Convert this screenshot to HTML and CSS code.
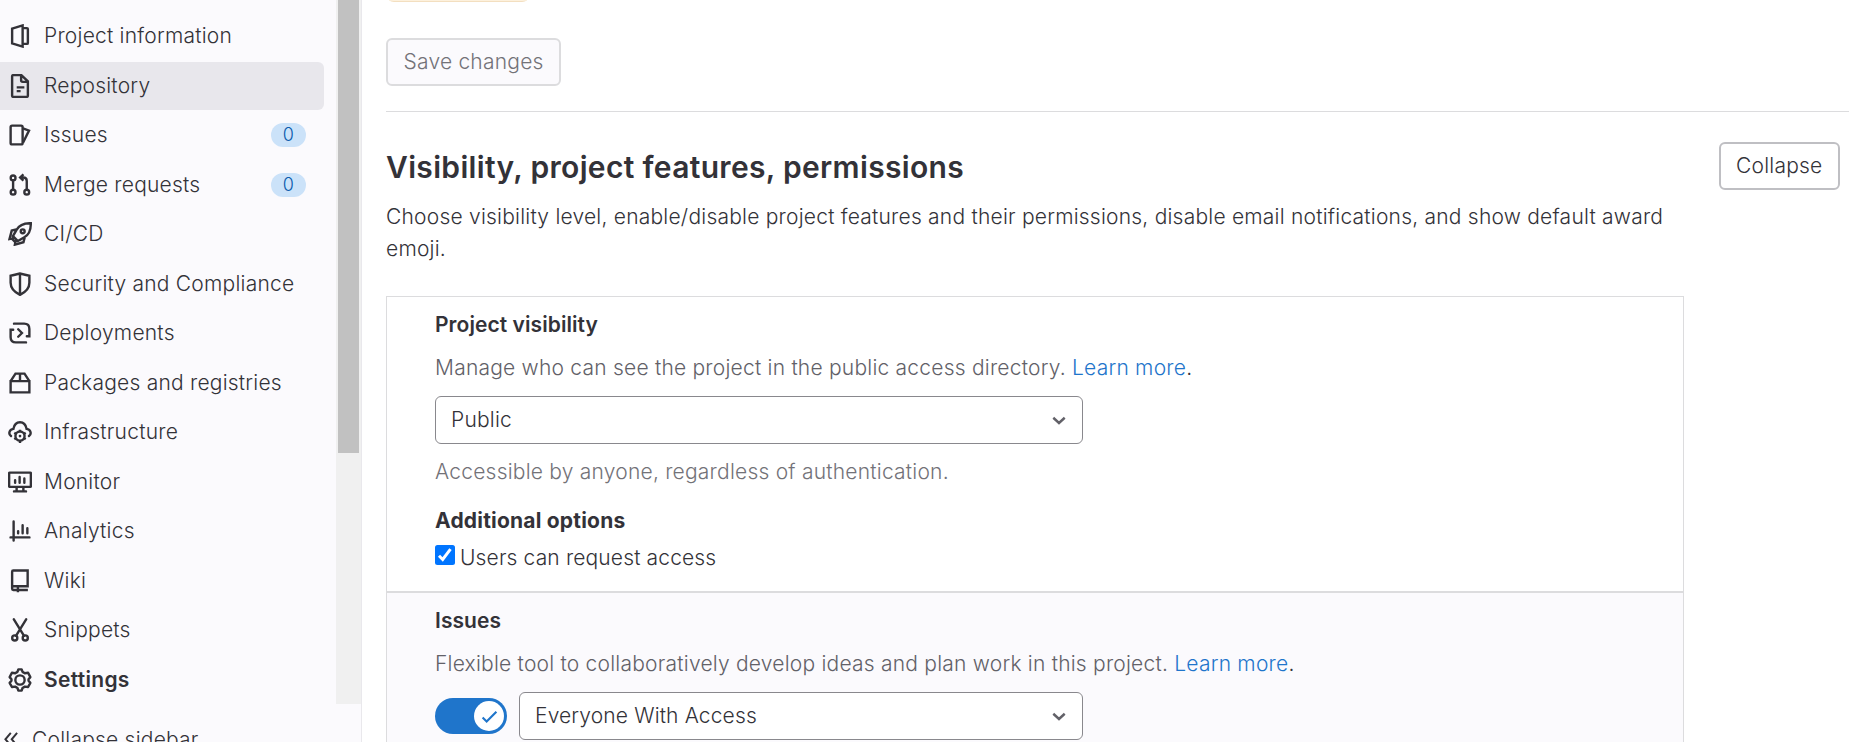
FILE: index.html
```html
<!DOCTYPE html>
<html lang="en">
<head>
<meta charset="utf-8">
<title>General settings</title>
<link rel="stylesheet" href="styles.css">
</head>
<body>
<div class="layout">
  <aside class="sidebar">
    <div class="sidebar-scroll">
      <nav class="menu">
        <a class="item"><svg class="icon" viewBox="0 0 16 16"><path d="M2.75 3.1 9.75.95v14.1l-7-2.15zM10 2.75h2.6q.65 0 .65.65v9.2q0 .65-.65.65H10"/></svg><span>Project information</span></a>
        <a class="item active"><svg class="icon" viewBox="0 0 16 16"><path d="M3.5.75h5.4l4.35 4.1v9.65q0 .75-.75.75h-9q-.75 0-.75-.75v-13q0-.75.75-.75zM8.75 1v3.2q0 1.05 1.05 1.05H13M5.8 8.9h5.1M5.8 11.4h2.6"/></svg><span>Repository</span></a>
        <a class="item"><svg class="icon" viewBox="0 0 16 16"><rect x="1.75" y="1.75" width="8" height="12.5" rx="1"/><path d="M10 3.6l4 1.45L10 13.2"/></svg><span>Issues</span><b class="count">0</b></a>
        <a class="item"><svg class="icon" viewBox="0 0 16 16"><circle cx="3.4" cy="3.25" r="1.6"/><circle cx="3.4" cy="12.75" r="1.6"/><circle cx="12.5" cy="12.75" r="1.6"/><path d="M3.4 5v6M12.5 11V5.3q0-2.3-2.3-2.3H8.3M10.3.9 8.1 3l2.2 2.1"/></svg><span>Merge requests</span><b class="count">0</b></a>
        <a class="item"><svg class="icon" viewBox="0 0 16 16"><path d="M15.2.8c-4.5-.1-7.700 1.200-9.400 4.300L3.300 9.400l3.300 3.300 4.300-2.500c3.100-1.700 4.400-4.900 4.300-9.400zM5.600 4.900 2.500 5.700 1 11.400l2.500-.5M11.100 10.400l-.8 3.100-5.700 1.600.5-2.600M3.600 9.600l-.4 2.200 1 1 2.200-.4"/><circle cx="9.800" cy="6.200" r="1.300"/></svg><span>CI/CD</span></a>
        <a class="item"><svg class="icon" viewBox="0 0 16 16"><path d="M8 1 1.750 2.500v4.700c0 3.600 2.400 6.200 6.250 8.050 3.850-1.850 6.250-4.450 6.250-8.050V2.500zM8 1v14"/></svg><span>Security and Compliance</span></a>
        <a class="item"><svg class="icon" viewBox="0 0 16 16"><path d="M4 1.750h6.750q3.500 0 3.500 3.500v4.900h-1.700M12 14.250H5.250q-3.500 0-3.500-3.500v-4.900h1.700M6.800 5.500 9.300 8l-2.500 2.500" stroke-linecap="round"/></svg><span>Deployments</span></a>
        <a class="item"><svg class="icon" viewBox="0 0 16 16"><path d="M1.750 6.750h12.500v7.500H1.750zM1.750 6.750 5 1.750h6l3.250 5M8 1.750v5"/></svg><span>Packages and registries</span></a>
        <a class="item"><svg class="icon" viewBox="0 0 16 16"><path d="M2 10.700C.2 9.400.6 6.300 3.600 5.900 4.100 3.200 5.700 1.500 8 1.500s3.900 1.700 4.400 4.400c3 .4 3.400 3.500 1.600 4.800" stroke-linecap="round"/><circle cx="8" cy="10.700" r="3.050"/><path d="M8 6.500v1.200M8 13.800V15.400M4.200 8.500l1.100.700M11.800 8.500l-1.100.700M4.200 12.900l1.100-.7M11.800 12.900l-1.100-.7"/><circle cx="8" cy="10.700" r=".5" stroke-width=".8"/></svg><span>Infrastructure</span></a>
        <a class="item"><svg class="icon" viewBox="0 0 16 16"><rect x=".75" y="1.750" width="14.500" height="9.500" rx=".4"/><path d="M5.750 11.250v2.700M10.250 11.250v2.700"/><path d="M4 14.250h8M4.750 6.800v1.700M7.750 4.700v3.800M10.900 5.700v2.800" stroke-linecap="round"/></svg><span>Monitor</span></a>
        <a class="item"><svg class="icon" viewBox="0 0 16 16"><path d="M3.750 1.700v12.600M1.700 12.250h12.600M6.750 8.200v1.300M9.750 4.200v5.300M12.900 6.200v3.300" stroke-linecap="round"/></svg><span>Analytics</span></a>
        <a class="item"><svg class="icon" viewBox="0 0 16 16"><path d="M3.500 1h9.600v10.500H2.750V1.750Q2.750 1 3.500 1zM2.750 11.500v1.700q0 .8.800.8h9.700M6.600 11.500v4"/></svg><span>Wiki</span></a>
        <a class="item"><svg class="icon" viewBox="0 0 16 16"><circle cx="4.500" cy="13.300" r="1.700"/><circle cx="11.500" cy="13.300" r="1.700"/><path d="M3.900.9l6.800 11M12.100.9l-6.800 11" stroke-linecap="round"/></svg><span>Snippets</span></a>
        <a class="item current"><svg class="icon" viewBox="0 0 16 16"><path d="M6.900.9h2.200l.6 1.700 1.500.9 2.200-.3 1.500 2.900-1.200 1.400v1l1.200 1.400-1.500 2.800-2.200-.3-1.500.9-.6 1.800H6.900l-.6-1.800-1.500-.9-2.200.3-1.500-2.800 1.200-1.400v-1L1.100 6.100l1.500-2.900 2.200.3 1.500-.9z" stroke-linejoin="round"/><circle cx="8" cy="8" r="3.100"/></svg><span>Settings</span></a>
      </nav>
      <div class="track"><div class="thumb"></div></div>
    </div>
    <a class="toggle-sidebar"><svg class="chevrons" viewBox="0 0 16 16"><path d="M7.200 3.200 3.600 7.500l3.600 4.300M11.400 3.200 7.800 7.500l3.600 4.300"/></svg><span>Collapse sidebar</span></a>
  </aside>
  <main class="content">
    <div class="badge"></div>
    <button class="btn disabled">Save changes</button>
    <section class="settings">
      <header class="head">
        <div class="intro">
          <h4>Visibility, project features, permissions</h4>
          <p>Choose visibility level, enable/disable project features and their permissions, disable email notifications, and show default award emoji.</p>
        </div>
        <button class="btn">Collapse</button>
      </header>
      <div class="panel">
        <div class="group">
          <h5>Project visibility</h5>
          <p class="help">Manage who can see the project in the public access directory. <a>Learn more</a><i>.</i></p>
          <div class="select"><span>Public</span><svg class="caret" viewBox="0 0 16 16"><path d="M4.200 6.500 8 10l3.800-3.500"/></svg></div>
          <p class="hint">Accessible by anyone, regardless of authentication.</p>
          <h5 class="extra">Additional options</h5>
          <label class="check"><svg class="box" viewBox="0 0 20 20"><rect width="20" height="20" rx="2.500" fill="#0075ff" stroke="none"/><path d="M4 10.800 7.700 14.500 15.500 4.200" stroke="#fff" stroke-width="3"/></svg><span>Users can request access</span></label>
        </div>
        <div class="group alt">
          <h5>Issues</h5>
          <p class="help">Flexible tool to collaboratively develop ideas and plan work in this project. <a>Learn more</a><i>.</i></p>
          <div class="controls">
            <div class="switch"><span class="knob"><svg viewBox="0 0 16 16"><path d="M1.500 9 5.300 12.700 14.500 3.500"/></svg></span></div>
            <div class="select"><span>Everyone With Access</span><svg class="caret" viewBox="0 0 16 16"><path d="M4.200 6.500 8 10l3.800-3.500"/></svg></div>
          </div>
        </div>
      </div>
    </section>
  </main>
</div>
</body>
</html>
```
FILE: styles.css
```css
* { box-sizing: border-box; }
body {
  margin: 0;
  height: 742px;
  overflow: hidden;
  background: #fff;
  color: #333238;
  font: 350 21px/32px Inter, "Noto Sans", sans-serif;
  letter-spacing: .22px;
}
svg { display: block; flex: none; fill: none; stroke: currentColor; }
h4, h5, p { margin: 0; }
i { font-style: normal; }
.layout { display: flex; height: 742px; }

.sidebar { width: 362px; flex: none; background: #fbfafd; border-right: 1px solid #e9e8ec; overflow: hidden; }
.sidebar-scroll { display: flex; height: 704px; }
.menu { flex: 1; display: flex; flex-direction: column; gap: 1.5px; padding: 12.4px 12px 0 0; }
.item { display: flex; align-items: center; height: 48px; flex: none; padding: 0 18px 0 8px; border-radius: 0 6px 6px 0; }
.item span { margin-left: 12px; flex: 1; white-space: nowrap; }
.icon { width: 24px; height: 24px; stroke-width: 1.6; }
.active { background: #e8e7ec; }
.current { font-weight: 600; letter-spacing: .3px; }
.count { width: 35px; height: 24px; border-radius: 12px; background: #cbe2f9; color: #0b5cad; font-size: 18px; line-height: 24px; font-weight: 350; text-align: center; }
.track { width: 25px; background: #f0f0f0; padding: 0 2px; }
.thumb { height: 453px; background: #c1c1c1; }
.toggle-sidebar { display: flex; align-items: center; height: 72px; gap: 8px; }
.chevrons { width: 24px; height: 24px; stroke-width: 1.3; }

.content { flex: 1; padding: 0 17px 0 24px; overflow: hidden; }
.badge { width: 138px; height: 2px; margin-left: 3px; background: #fdf1dd; border-bottom: 1px solid #f3dfc0; border-radius: 0 0 8px 8px / 0 0 2px 2px; }
.btn { height: 48px; padding: 0 15.5px; border: 2px solid #bfbfc3; border-radius: 6px; background: #fff; color: #333238; font: inherit; letter-spacing: inherit; flex: none; }
.disabled { display: block; margin-top: 36px; border-color: #dcdcde; background: #fbfafd; color: #737278; }
.settings { margin-top: 25px; border-top: 1px solid #dcdcde; }
.head { display: flex; align-items: flex-start; justify-content: space-between; padding: 30px 9px 0 0; }
.intro { width: 1298px; padding-top: 7px; }
h4 { font-size: 30px; line-height: 36px; font-weight: 600; letter-spacing: .33px; }
.intro p { margin-top: 16px; }
.panel { width: 1298px; margin-top: 31px; border: 1px solid #dcdcde; border-bottom: 0; }
.group { padding: 13px 48px 17px; }
.alt { height: 160px; border-top: 2px solid #dcdcde; background: #fbfafd; }
h5 { font-size: 21px; line-height: 30px; font-weight: 600; letter-spacing: .07px; }
.help { margin: 12px 0; color: #626168; }
.help a { color: #1f75cb; }
.help i { color: #333238; }
.select { display: flex; align-items: center; justify-content: space-between; width: 648px; height: 48px; padding: 0 11px 0 15px; border: 1px solid #89888d; border-radius: 6px; background: #fff; }
.caret { width: 24px; height: 24px; stroke: #626168; stroke-width: 1.6; }
.hint { margin-top: 12px; color: #737278; }
.extra { margin-top: 18px; font-weight: 700; letter-spacing: .2px; }
.check { display: flex; gap: 5px; margin-top: 6px; letter-spacing: .14px; }
.box { width: 20px; height: 20px; margin-top: 3px; }
.controls { display: flex; align-items: center; gap: 12px; width: 648px; }
.controls .select { flex: 1; letter-spacing: .14px; }
.switch { display: flex; justify-content: flex-end; width: 72px; height: 36px; padding: 3px; border-radius: 18px; background: #1f75cb; }
.knob { display: grid; place-items: center; width: 30px; height: 30px; border-radius: 50%; background: #fff; color: #1f75cb; }
.knob svg { width: 17px; height: 17px; stroke-width: 2; }
```
